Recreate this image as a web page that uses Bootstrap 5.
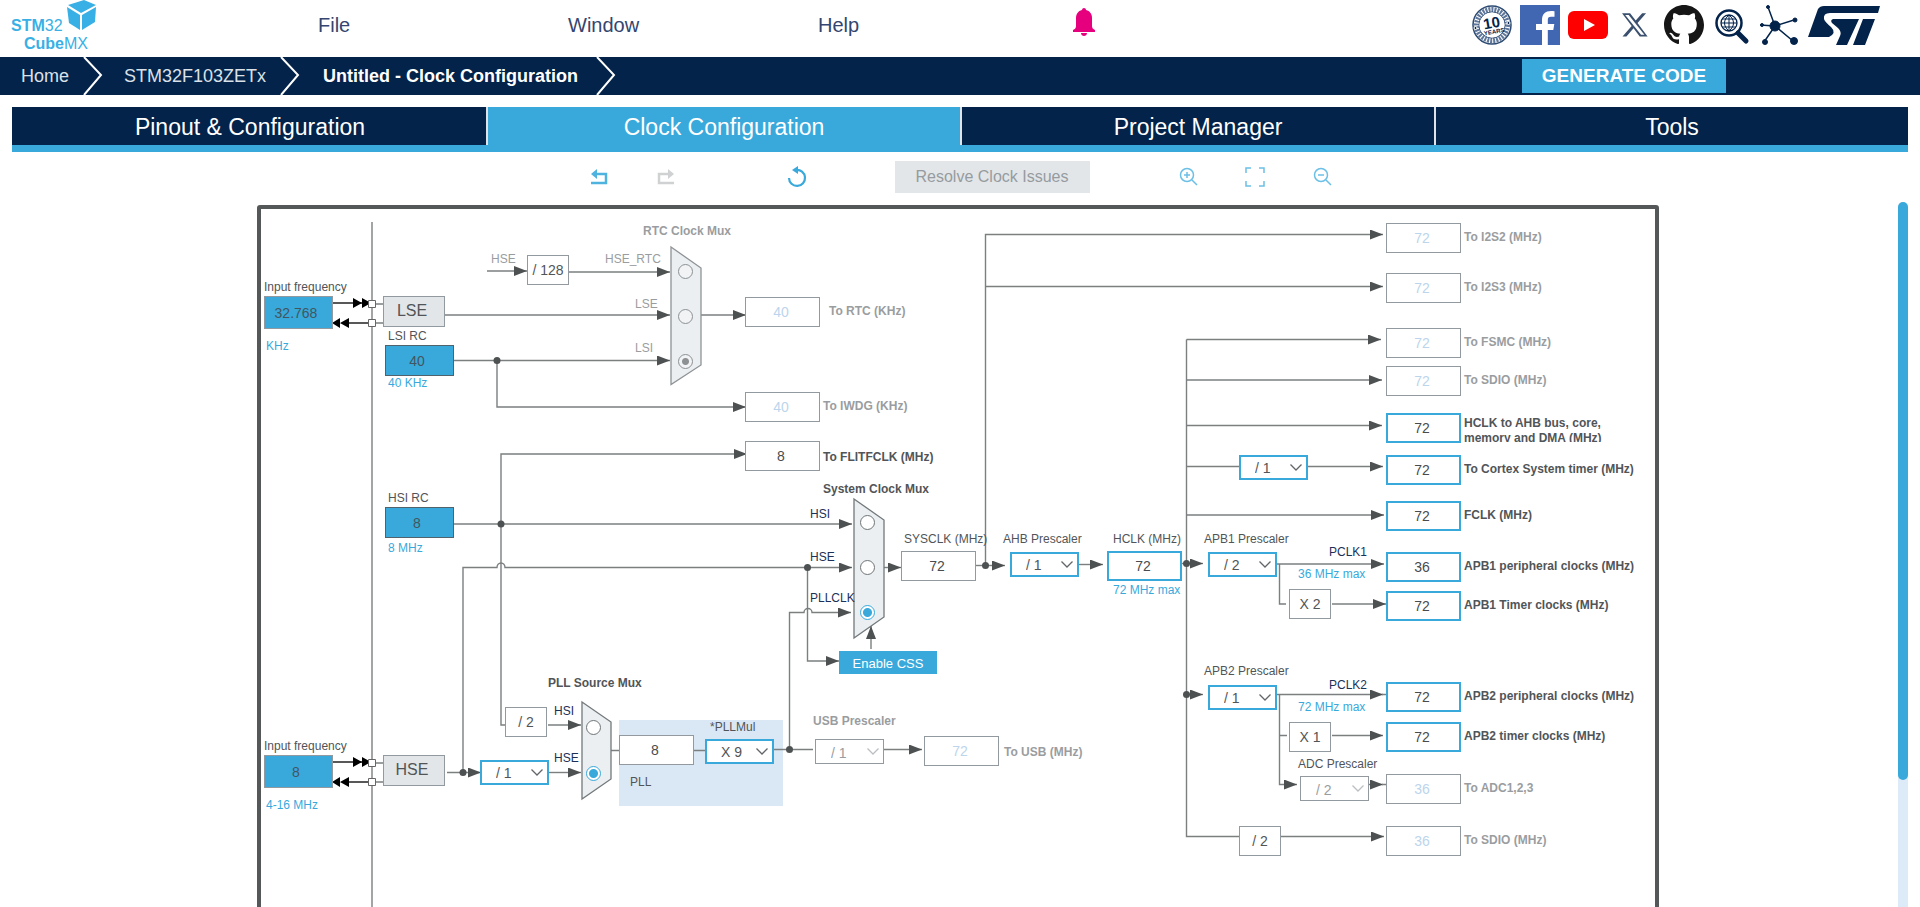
<!DOCTYPE html>
<html lang="en">
<head>
<meta charset="utf-8">
<meta name="viewport" content="width=device-width, initial-scale=1">
<title>STM32CubeMX - Clock Configuration</title>
<link href="https://cdn.jsdelivr.net/npm/bootstrap@5.3.0/dist/css/bootstrap.min.css" rel="stylesheet">
<style>
:root { --navy:#03234b; --sky:#39a9dc; --ink:#515558; --mute:#9a9d9f; --edge:#929aa0; --plate:#e2e6e9; }
body { font-family:"Liberation Sans", Arial, sans-serif; font-size:14px; color:var(--ink); background:#fff; overflow:hidden; }

/* header */
.top-bar { height:57px; padding:0 40px 8px 0; }
.brand-logo { width:264px; height:57px; }
.menu-link { flex:0 0 250px; padding:0 54px; font-size:20px; line-height:24px; color:#34456f; text-decoration:none; }
.bell { width:24px; height:30px; padding:0; border:0; background:none; margin-left:10px; }
.crumbs { height:38px; background:var(--navy); }
.crumbs a { color:#dbe1e8; font-size:18px; text-decoration:none; padding:0 14px 0 21px; }
.crumbs a.current { font-weight:700; color:#fff; padding:0 18px 0 23px; }
.crumbs svg { width:20px; height:38px; flex:none; }
.btn-generate { background:var(--sky); color:#fff; font-weight:700; font-size:19px; line-height:24px; width:204px; height:34px; padding:0; border:0; border-radius:0; margin-right:194px; }

/* tabs */
.view-tabs { margin:12px 12px 0; border-bottom:7px solid var(--sky); }
.view-tabs .nav-link { font-size:23px; line-height:26px; padding:7px 0 5px; border:0; border-radius:0; background:var(--navy); color:#fff; border-left:2px solid #dfe3e8; }
.view-tabs .nav-item:first-child .nav-link { border-left-color:var(--navy); }
.view-tabs .nav-link.active { background:var(--sky); color:#fff; }

/* toolbar */
.tools { height:48px; padding-top:2px; }
.tool { width:24px; height:24px; padding:0; border:0; background:none; display:flex; align-items:center; justify-content:center; }
.btn-resolve { width:195px; height:32px; margin:0 86px; padding:0; border:0; border-radius:0; font-size:16px; line-height:24px; }
.btn-resolve:disabled { background:var(--plate); color:#969b9f; opacity:1; }
.gap-s { margin-right:43px; } .gap-l { margin-right:107px; }

/* diagram */
.work { margin:0 12px; min-height:0; }
.canvas-wrap { overflow:hidden; padding-left:10px; }
.canvas { position:relative; width:1420px; height:900px; margin:0 auto; }
.track { width:10px; margin-top:2px; background:#dcebf7; border-radius:5px 5px 0 0; }
.thumb { height:82%; background:var(--sky); border-radius:5px; }
.wires { position:absolute; inset:0; width:100%; height:100%; }
.wires .w { fill:none; stroke:#7b7f7f; stroke-width:1.4; }
.wires .k { fill:none; stroke:#222; stroke-width:1.4; }
.node { position:absolute; }
.tag { position:absolute; font-size:12px; line-height:16px; white-space:nowrap; }
.tag-b { font-weight:700; }
.dim { color:var(--mute); }
.lit { color:var(--sky); }
.sig { color:#1b3158; }
.freq { width:75px; height:30px; padding:0 3px 0 0; text-align:center; border:1px solid var(--edge); background:#fff; color:#484c4e; font-size:14px; line-height:20px; border-radius:0; }
.freq:disabled { color:#bcd5ec; opacity:1; }
.freq.on { border:2px solid var(--sky); }
.source { width:69px; height:33px; padding:0 5px 0 0; text-align:center; background:var(--sky); border:1px solid var(--edge); color:#42565f; font-size:14px; line-height:20px; }
.source.rc { height:31px; border-color:#50636c; }
.osc { width:62px; height:31px; padding-right:4px; background:var(--plate); border:1px solid var(--edge); font-size:16px; line-height:28px; text-align:center; }
.ratio { width:42px; height:30px; background:#fff; border:1px solid var(--edge); text-align:center; font-size:14px; line-height:28px; white-space:nowrap; }
.scale { width:69px; height:25px; appearance:none; border:2px solid var(--sky); border-radius:0; padding:1px 0 0 14px; font-size:14px; line-height:20px; color:var(--ink);
  background:#fff url("data:image/svg+xml,%3Csvg xmlns='http://www.w3.org/2000/svg' width='12' height='7' fill='none' stroke='%23626669' stroke-width='1.3'%3E%3Cpath d='M.5.5 6 6 11.5.5'/%3E%3C/svg%3E") no-repeat right 4px center; }
.scale:disabled { border:1px solid var(--edge); padding:2px 0 0 15px; color:var(--mute); opacity:1;
  background-image:url("data:image/svg+xml,%3Csvg xmlns='http://www.w3.org/2000/svg' width='12' height='7' fill='none' stroke='%23bbbfc2' stroke-width='1.3'%3E%3Cpath d='M.5.5 6 6 11.5.5'/%3E%3C/svg%3E"); }
.pick { position:absolute; width:15px; height:15px; margin:0; appearance:none; border:1px solid #6f7477; border-radius:50%; background:#fff; }
.pick:checked { border-color:var(--sky); background:radial-gradient(circle, var(--sky) 4px, #fff 5px); }
.pick:disabled { border-color:#8d9194; background:#f1f3f5; }
.pick:disabled:checked { background:radial-gradient(circle, #8d9194 3px, #f1f3f5 4px); }
.btn-css { width:98px; height:23px; padding:2px 0 0; border:0; border-radius:0; background:var(--sky); color:#fff; font-size:13px; line-height:20px; }
.pll-panel { width:164px; height:86px; background:#dae8f5; }

/* output column: field and caption side by side */
.out { position:absolute; left:1136px; display:flex; align-items:center; gap:3px; }
.out label { font-size:12px; line-height:15px; font-weight:700; padding-bottom:2px; white-space:nowrap; }
.out .two-lines { align-self:flex-start; padding:3px 0 0; height:29px; width:146px; white-space:normal; overflow:hidden; }

#frame { left:7px; top:5px; width:1402px; height:880px; border:4px solid #545858; border-radius:3px; }
#lseFreq { left:14px; top:96px; } #lseFreqT { left:14px; top:79px; } #lseUnit { left:16px; top:138px; }
#hseFreq { left:14px; top:555px; } #hseFreqT { left:14px; top:538px; } #hseUnit { left:16px; top:597px; }
#lse { left:133px; top:96px; } #hse { left:133px; top:555px; }
#lsiT { left:138px; top:128px; } #lsi { left:135px; top:145px; } #lsiUnit { left:138px; top:175px; }
#hsiT { left:138px; top:290px; } #hsi { left:135px; top:307px; } #hsiUnit { left:138px; top:340px; }
#rtcT { left:393px; top:23px; } #rtcHse { left:241px; top:51px; } #rtcDiv { left:277px; top:55px; }
#rtcS1 { left:355px; top:51px; } #rtcS2 { left:385px; top:96px; } #rtcS3 { left:385px; top:140px; }
#rtcP1 { left:428px; top:64px; } #rtcP2 { left:428px; top:109px; } #rtcP3 { left:428px; top:154px; }
#rtcOut { left:495px; top:97px; } #rtcOutT { left:579px; top:103px; }
#iwdg { left:495px; top:192px; } #iwdgT { left:573px; top:198px; }
#flit { left:495px; top:241px; } #flitT { left:573px; top:249px; }
#sysT { left:573px; top:281px; } #sysS1 { left:560px; top:306px; } #sysS2 { left:560px; top:349px; } #sysS3 { left:560px; top:390px; }
#sysP1 { left:610px; top:315px; } #sysP2 { left:610px; top:360px; } #sysP3 { left:610px; top:405px; }
#css { left:589px; top:451px; }
#sysclkT { left:654px; top:331px; } #sysclk { left:651px; top:351px; }
#ahbT { left:753px; top:331px; } #ahb { left:760px; top:352px; }
#hclkT { left:863px; top:331px; } #hclk { left:857px; top:351px; } #hclkMax { left:863px; top:382px; }
#pllT { left:298px; top:475px; } #pllDiv { left:255px; top:507px; } #pllS1 { left:304px; top:503px; } #pllS2 { left:304px; top:550px; }
#hsePre { left:230px; top:560px; } #pllP1 { left:336px; top:520px; } #pllP2 { left:336px; top:566px; }
#pll { left:369px; top:520px; } #pllIn { left:369px; top:535px; } #pllMulT { left:460px; top:519px; } #pllMul { left:455px; top:539px; } #pllName { left:380px; top:574px; }
#usbT { left:563px; top:513px; } #usbPre { left:565px; top:539px; } #usb { left:674px; top:536px; } #usbOutT { left:754px; top:544px; }
#cortexPre { left:989px; top:255px; }
#apb1T { left:954px; top:331px; } #apb1 { left:958px; top:352px; } #pclk1 { left:1079px; top:344px; } #pclk1Max { left:1048px; top:366px; } #apb1Mul { left:1039px; top:389px; }
#apb2T { left:954px; top:463px; } #apb2 { left:958px; top:485px; } #pclk2 { left:1079px; top:477px; } #pclk2Max { left:1048px; top:499px; } #apb2Mul { left:1039px; top:522px; }
#adcT { left:1048px; top:556px; } #adcPre { left:1050px; top:576px; } #sdioDiv { left:989px; top:626px; }
#o1 { top:23px; } #o2 { top:73px; } #o3 { top:128px; } #o4 { top:166px; } #o5 { top:213px; } #o6 { top:255px; } #o7 { top:301px; }
#o8 { top:352px; } #o9 { top:391px; } #o10 { top:482px; } #o11 { top:522px; } #o12 { top:574px; } #o13 { top:626px; }
</style>
</head>
<body class="vh-100 d-flex flex-column">

<header class="top-bar d-flex align-items-center flex-shrink-0">
  <svg class="brand-logo flex-shrink-0 align-self-start" viewBox="0 0 264 57" role="img" aria-label="STM32 CubeMX" fill="#39b0e5" font-size="16">
    <text x="11" y="31"><tspan font-weight="700">STM</tspan>32</text>
    <text x="24" y="49"><tspan font-weight="700">Cube</tspan>MX</text>
    <path d="M68 5 84 0 96 5 81 13Z"/><path d="M67 7 80 15V30L69 23Z"/><path d="M82 15 96 7 95 22 82 30Z"/>
  </svg>
  <nav class="d-flex">
    <a class="menu-link" href="#">File</a>
    <a class="menu-link" href="#">Window</a>
    <a class="menu-link" href="#">Help</a>
  </nav>
  <div class="flex-grow-1 ps-5">
    <button class="bell" type="button" aria-label="Notifications"><svg class="d-block" width="24" height="30" viewBox="0 0 24 30" fill="#e6007e"><path d="M12 1c1 0 2 .8 2 2 4 1 6 4 6 8v8c0 2 1 3 3 4v2H1v-2c2-1 3-2 3-4v-8c0-4 2-7 6-8 0-1.200 1-2 2-2Z"/><path d="M9 26h6c0 2-1.500 3-3 3s-3-1-3-3Z"/></svg></button>
  </div>
  <div class="d-flex gap-2 flex-shrink-0 text-nowrap">
    <a href="#" aria-label="10 years"><svg class="d-block" width="40" height="40" viewBox="0 0 40 40" fill="none" stroke="#2c4a72"><circle cx="20" cy="20" r="19" stroke-width="1.500"/><circle cx="20" cy="20" r="15.500" stroke-width="5" stroke-dasharray="2 1" stroke="#5f779a"/><circle cx="20" cy="20" r="13" stroke-width="1"/><circle cx="20" cy="20" r="12.500" fill="#fff" stroke="none"/><circle cx="3.500" cy="23" r="1.500" fill="#03234b" stroke="#fff"/><circle cx="36.500" cy="18" r="1.500" fill="#03234b" stroke="#fff"/><g transform="rotate(-10 20 20)" fill="#03234b" stroke="none" font-weight="700" text-anchor="middle"><text x="20" y="23" font-size="15">10</text><text x="21" y="29" font-size="6">YEARS</text></g></svg></a>
    <a href="#" aria-label="Facebook"><svg class="d-block" width="40" height="40" viewBox="0 0 40 40"><rect width="40" height="40" fill="#4267b2"/><path fill="#fff" d="M22 40V25h-6v-6h6v-4c0-6 3.500-9 9-9 1.600 0 3 .1 3.500.2v5.600h-3.500c-2.500 0-3.200 1.200-3.200 3.200v4h6.500l-1 6h-5.500v15Z"/></svg></a>
    <a href="#" aria-label="YouTube"><svg class="d-block" width="40" height="40" viewBox="0 0 40 40"><rect y="6" width="40" height="28" rx="6" fill="red"/><path fill="#fff" d="m16 14 11 6-11 6Z"/></svg></a>
    <a href="#" aria-label="X"><svg class="d-block" width="40" height="40" viewBox="0 0 40 40"><path transform="translate(6 7) scale(1.600)" fill="#3a506e" d="M12.600.75h2.454l-5.360 6.142L16 15.250h-4.937l-3.867-5.070-4.425 5.070H.316l5.733-6.570L0 .75h5.063l3.495 4.633L12.601.75Z"/><path transform="translate(6 7) scale(1.600)" fill="#fff" d="M11.900 14.200h2.100L4.200 1.800H2Z"/></svg></a>
    <a href="#" aria-label="GitHub"><svg class="d-block" width="40" height="40" viewBox="0 0 16 16" fill="#161616"><path d="M8 0C3.580 0 0 3.580 0 8c0 3.540 2.290 6.530 5.470 7.590.4.070.55-.17.55-.38 0-.19-.01-.82-.01-1.490-2.010.37-2.530-.49-2.690-.94-.09-.23-.48-.94-.82-1.130-.28-.15-.68-.52-.01-.53.63-.01 1.080.58 1.230.82.72 1.210 1.870.87 2.330.66.07-.52.28-.87.51-1.070-1.780-.2-3.640-.89-3.640-3.950 0-.87.31-1.590.82-2.150-.08-.2-.36-1.020.08-2.120 0 0 .67-.21 2.200.82.64-.18 1.320-.27 2-.27s1.360.09 2 .27c1.530-1.040 2.200-.82 2.200-.82.44 1.100.16 1.920.08 2.120.51.56.82 1.270.82 2.150 0 3.070-1.870 3.750-3.650 3.950.29.25.54.73.54 1.480 0 1.070-.01 1.930-.01 2.200 0 .21.15.46.55.38A8.010 8.010 0 0 0 16 8c0-4.420-3.580-8-8-8"/></svg></a>
    <a href="#" aria-label="Search"><svg class="d-block" width="40" height="40" viewBox="0 0 40 40" fill="none" stroke="#03234b"><circle cx="17" cy="18" r="12.500" stroke-width="2.500"/><path d="m26 28 8 8" stroke-width="5" stroke-linecap="round"/><circle cx="17" cy="18" r="8" stroke-width="1.300"/><path d="M9 18h16M10 14h14M10 22h14M17 10v16M17 10c-6 5-6 11 0 16M17 10c6 5 6 11 0 16" stroke-width="1"/></svg></a>
    <a href="#" aria-label="Network"><svg class="d-block" width="40" height="40" viewBox="0 0 40 40" fill="#03234b" stroke="#03234b"><path d="M15 21 8 2M15 21 34 15M15 21 0 20M15 21 4 37M15 21 33 36" stroke-width="1.500"/><circle cx="15" cy="21" r="5"/><circle cx="8" cy="2" r="1.500"/><circle cx="35" cy="15" r="2"/><circle cx="2" cy="20" r="1.500"/><circle cx="5" cy="37" r="2.500"/><circle cx="34" cy="36" r="3.500"/></svg></a>
    <a href="#" aria-label="ST"><svg class="d-block" width="72" height="40" viewBox="0 0 72 40" fill="#03234b"><path d="M0 32 10 4Q12 1 16 1H72L70 8H22Q15 8 16 14 17 17 23 22 29 28 21 32ZM25 14H51L39 40H28L32 31Q34 27 30 23L24 18Q22 15 25 14ZM55 14H67L57 40H45Z"/></svg></a>
  </div>
</header>

<nav class="crumbs d-flex align-items-center flex-shrink-0" aria-label="breadcrumb">
  <a href="#">Home</a>
  <svg viewBox="0 0 20 38" fill="none" stroke="#fff" stroke-width="2"><path d="M1 0 18 18 1 38"/></svg>
  <a href="#">STM32F103ZETx</a>
  <svg viewBox="0 0 20 38" fill="none" stroke="#fff" stroke-width="2"><path d="M1 0 18 18 1 38"/></svg>
  <a class="current" href="#" aria-current="page">Untitled - Clock Configuration</a>
  <svg viewBox="0 0 20 38" fill="none" stroke="#fff" stroke-width="2"><path d="M1 0 18 18 1 38"/></svg>
  <button class="btn btn-generate ms-auto" type="button">GENERATE CODE</button>
</nav>

<ul class="view-tabs nav nav-fill nav-justified flex-shrink-0">
  <li class="nav-item"><a class="nav-link" href="#">Pinout &amp; Configuration</a></li>
  <li class="nav-item"><a class="nav-link active" href="#">Clock Configuration</a></li>
  <li class="nav-item"><a class="nav-link" href="#">Project Manager</a></li>
  <li class="nav-item"><a class="nav-link" href="#">Tools</a></li>
</ul>

<div class="tools d-flex align-items-center justify-content-center flex-shrink-0" role="toolbar" aria-label="Clock tools">
  <button class="tool gap-s" type="button" aria-label="Undo"><svg width="18" height="16" viewBox="0 0 18 16" fill="none" stroke="#4fb3e0" stroke-width="2.500"><path d="M4 5h12v9H1"/><path d="M7 0v10L1 5Z" fill="#4fb3e0" stroke="none"/></svg></button>
  <button class="tool gap-l" type="button" aria-label="Redo" disabled><svg width="18" height="16" viewBox="0 0 18 16" fill="none" stroke="#cfd1d2" stroke-width="2.500"><path d="M14 5H2v9h15"/><path d="M11 0v10l6-5Z" fill="#cfd1d2" stroke="none"/></svg></button>
  <button class="tool" type="button" aria-label="Reset"><svg width="20" height="22" viewBox="0 0 20 22" fill="none" stroke="#39a9dc" stroke-width="2.200"><path d="M2 12a8 8 0 1 0 7-8"/><path d="M11 0v8L5 4Z" fill="#39a9dc" stroke="none"/></svg></button>
  <button class="btn btn-resolve" type="button" disabled>Resolve Clock Issues</button>
  <button class="tool gap-s" type="button" aria-label="Zoom in"><svg width="20" height="20" viewBox="0 0 20 20" fill="none" stroke="#6cc0e6" stroke-width="1.500"><circle cx="9" cy="8" r="6.500"/><path d="m14 13 5 5M9 5v6M6 8h6"/></svg></button>
  <button class="tool gap-s" type="button" aria-label="Fit"><svg width="20" height="20" viewBox="0 0 20 20" fill="none" stroke="#6cc0e6" stroke-width="1.500"><path d="M1 6V1h5M14 1h5v5M19 14v5h-5M6 19H1v-5"/></svg></button>
  <button class="tool" type="button" aria-label="Zoom out"><svg width="20" height="20" viewBox="0 0 20 20" fill="none" stroke="#6cc0e6" stroke-width="1.500"><circle cx="9" cy="8" r="6.500"/><path d="m14 13 5 5M6 8h6"/></svg></button>
</div>

<main class="work d-flex flex-grow-1">
  <div class="canvas-wrap flex-grow-1">
    <div class="canvas">
      <div class="node" id="frame"></div>
      <div class="node pll-panel" id="pll"></div>
      <svg class="wires" viewBox="0 0 1420 900" aria-hidden="true">
        <defs>
          <marker id="tip" markerUnits="userSpaceOnUse" markerWidth="13" markerHeight="10" refX="13" refY="5" orient="auto"><path d="M0 0 13 5 0 10Z" fill="#4d5152"/></marker>
          <g id="pins">
            <path class="k" d="M83 103h36M99 123h20"/>
            <path d="m103 98 9 5-9 5ZM112 98l9 5-9 5ZM90 118l-8 5 8 5ZM99 118l-9 5 9 5Z"/>
            <path class="w" d="M126 104h7M126 123h7"/>
            <path d="M118.500 100.500h7v7h-7ZM118.500 119.500h7v7h-7Z" fill="#fff" stroke="#666"/>
          </g>
        </defs>
        <path class="w" d="M122 22V900"/>
        <use href="#pins"/><use href="#pins" y="459"/>
        <g class="w" marker-end="url(#tip)">
          <path d="M237 71H277"/><path d="M319 72H420"/><path d="M195 115H420"/><path d="M204 160.500H420"/><path d="M247 160V207H496"/><path d="M451 115H496"/>
          <path d="M204 324H602"/><path d="M251 324V254H497"/><path d="M298 525H331"/><path d="M299 572.500H331"/>
          <path d="M197 572.500H231"/><path d="M213 572V367.500H247a4 4.500 0 0 1 8 0H602"/>
          <path d="M539.500 549V412.500H554a4 4 0 0 1 8 0H601"/><path d="M557.500 367V461H589"/>
          <path d="M634 367.500H651"/><path d="M725 365.500H755"/><path d="M829 364.500H853"/><path d="M932 363.500H953"/>
          <path d="M735.500 365V34.500H1133"/><path d="M735.500 86.500H1133"/>
          <path d="M936.500 139.500H1131"/><path d="M936.500 180H1132"/><path d="M936.500 225.500H1132"/><path d="M1058 266.500H1133"/><path d="M936.500 315H1134"/>
          <path d="M1027 364H1134"/><path d="M1082 404H1136"/><path d="M936.500 494.500H953"/><path d="M1027 494.500H1133"/><path d="M1082 535.500H1133"/>
          <path d="M1029.500 494V584.500H1047"/><path d="M1119 584.500H1133"/><path d="M1031 636.500H1134"/><path d="M634 549.500H672"/>
        </g>
        <path class="w" d="M251 324V525H255M361 550.500H369M444 550.500H456M524 549.500H563M936.500 139.500V636.500H989M936.500 266.500H989M1029.500 364V404H1036M1029.500 535.500H1037M1132 494.500H1136M1132 584.500H1136"/>
        <g fill="#4d5152"><circle cx="247" cy="160.500" r="3.500"/><circle cx="251" cy="324" r="3.500"/><circle cx="213" cy="572.500" r="3.500"/><circle cx="539.500" cy="549.500" r="3.500"/><circle cx="557.500" cy="367.500" r="3.500"/><circle cx="735.500" cy="365.500" r="3.500"/><circle cx="936.500" cy="363.500" r="3.500"/><circle cx="936.500" cy="494.500" r="3.500"/></g>
        <g fill="#ebeff2" stroke="#73787b" stroke-width="1.300"><path d="M421 47 451 68V165L421 184.500Z" stroke="#8f9396"/><path d="M332 502 361 522V579L332 599Z"/><path d="M604 299 634 320V417L604 438Z"/></g>
        <path class="w" d="M621 449V426" marker-end="url(#tip)"/>
      </svg>

      <label class="tag" id="lseFreqT" for="lseFreq">Input frequency</label>
      <input class="node source" id="lseFreq" type="text" value="32.768">
      <span class="tag lit" id="lseUnit">KHz</span>
      <div class="node osc" id="lse">LSE</div>
      <label class="tag" id="lsiT" for="lsi">LSI RC</label>
      <input class="node source rc" id="lsi" type="text" value="40" readonly>
      <span class="tag lit" id="lsiUnit">40 KHz</span>
      <label class="tag" id="hsiT" for="hsi">HSI RC</label>
      <input class="node source rc" id="hsi" type="text" value="8" readonly>
      <span class="tag lit" id="hsiUnit">8 MHz</span>
      <label class="tag" id="hseFreqT" for="hseFreq">Input frequency</label>
      <input class="node source" id="hseFreq" type="text" value="8">
      <span class="tag lit" id="hseUnit">4-16 MHz</span>
      <div class="node osc" id="hse">HSE</div>

      <span class="tag tag-b dim" id="rtcT">RTC Clock Mux</span>
      <span class="tag dim" id="rtcHse">HSE</span>
      <div class="node ratio" id="rtcDiv">/ 128</div>
      <label class="tag dim" id="rtcS1" for="rtcP1">HSE_RTC</label>
      <label class="tag dim" id="rtcS2" for="rtcP2">LSE</label>
      <label class="tag dim" id="rtcS3" for="rtcP3">LSI</label>
      <input class="pick" id="rtcP1" type="radio" name="rtc" disabled>
      <input class="pick" id="rtcP2" type="radio" name="rtc" disabled>
      <input class="pick" id="rtcP3" type="radio" name="rtc" disabled checked>
      <input class="node freq" id="rtcOut" type="text" value="40" disabled>
      <label class="tag tag-b dim" id="rtcOutT" for="rtcOut">To RTC (KHz)</label>
      <input class="node freq" id="iwdg" type="text" value="40" disabled>
      <label class="tag tag-b dim" id="iwdgT" for="iwdg">To IWDG (KHz)</label>
      <input class="node freq" id="flit" type="text" value="8" readonly>
      <label class="tag tag-b" id="flitT" for="flit">To FLITFCLK (MHz)</label>

      <span class="tag tag-b" id="sysT">System Clock Mux</span>
      <label class="tag sig" id="sysS1" for="sysP1">HSI</label>
      <label class="tag sig" id="sysS2" for="sysP2">HSE</label>
      <label class="tag sig" id="sysS3" for="sysP3">PLLCLK</label>
      <input class="pick" id="sysP1" type="radio" name="sys">
      <input class="pick" id="sysP2" type="radio" name="sys">
      <input class="pick" id="sysP3" type="radio" name="sys" checked>
      <button class="node btn btn-css" id="css" type="button">Enable CSS</button>
      <label class="tag" id="sysclkT" for="sysclk">SYSCLK (MHz)</label>
      <input class="node freq" id="sysclk" type="text" value="72" readonly>
      <label class="tag" id="ahbT" for="ahb">AHB Prescaler</label>
      <select class="node scale" id="ahb"><option>/ 1</option><option>/ 2</option><option>/ 4</option></select>
      <label class="tag" id="hclkT" for="hclk">HCLK (MHz)</label>
      <input class="node freq on" id="hclk" type="text" value="72">
      <span class="tag lit" id="hclkMax">72 MHz max</span>

      <span class="tag tag-b" id="pllT">PLL Source Mux</span>
      <div class="node ratio" id="pllDiv">/ 2</div>
      <label class="tag sig" id="pllS1" for="pllP1">HSI</label>
      <label class="tag sig" id="pllS2" for="pllP2">HSE</label>
      <input class="pick" id="pllP1" type="radio" name="pllsrc">
      <input class="pick" id="pllP2" type="radio" name="pllsrc" checked>
      <select class="node scale" id="hsePre" aria-label="HSE divider"><option>/ 1</option><option>/ 2</option></select>
      <input class="node freq" id="pllIn" type="text" value="8" aria-label="PLL input" readonly>
      <label class="tag" id="pllMulT" for="pllMul">*PLLMul</label>
      <select class="node scale" id="pllMul"><option>X 9</option><option>X 8</option></select>
      <span class="tag" id="pllName">PLL</span>

      <label class="tag tag-b dim" id="usbT" for="usbPre">USB Prescaler</label>
      <select class="node scale" id="usbPre" disabled><option>/ 1</option></select>
      <input class="node freq" id="usb" type="text" value="72" disabled>
      <label class="tag tag-b dim" id="usbOutT" for="usb">To USB (MHz)</label>

      <select class="node scale" id="cortexPre" aria-label="Cortex timer prescaler"><option>/ 1</option><option>/ 8</option></select>
      <label class="tag" id="apb1T" for="apb1">APB1 Prescaler</label>
      <select class="node scale" id="apb1"><option>/ 2</option><option>/ 1</option></select>
      <span class="tag sig" id="pclk1">PCLK1</span>
      <span class="tag lit" id="pclk1Max">36 MHz max</span>
      <div class="node ratio" id="apb1Mul">X 2</div>
      <label class="tag" id="apb2T" for="apb2">APB2 Prescaler</label>
      <select class="node scale" id="apb2"><option>/ 1</option><option>/ 2</option></select>
      <span class="tag sig" id="pclk2">PCLK2</span>
      <span class="tag lit" id="pclk2Max">72 MHz max</span>
      <div class="node ratio" id="apb2Mul">X 1</div>
      <label class="tag" id="adcT" for="adcPre">ADC Prescaler</label>
      <select class="node scale" id="adcPre" disabled><option>/ 2</option></select>
      <div class="node ratio" id="sdioDiv">/ 2</div>

      <div class="out" id="o1"><input class="freq" id="f1" type="text" value="72" disabled><label class="dim" for="f1">To I2S2 (MHz)</label></div>
      <div class="out" id="o2"><input class="freq" id="f2" type="text" value="72" disabled><label class="dim" for="f2">To I2S3 (MHz)</label></div>
      <div class="out" id="o3"><input class="freq" id="f3" type="text" value="72" disabled><label class="dim" for="f3">To FSMC (MHz)</label></div>
      <div class="out" id="o4"><input class="freq" id="f4" type="text" value="72" disabled><label class="dim" for="f4">To SDIO (MHz)</label></div>
      <div class="out" id="o5"><input class="freq on" id="f5" type="text" value="72"><label class="two-lines" for="f5">HCLK to AHB bus, core, memory and DMA (MHz)</label></div>
      <div class="out" id="o6"><input class="freq on" id="f6" type="text" value="72"><label for="f6">To Cortex System timer (MHz)</label></div>
      <div class="out" id="o7"><input class="freq on" id="f7" type="text" value="72"><label for="f7">FCLK (MHz)</label></div>
      <div class="out" id="o8"><input class="freq on" id="f8" type="text" value="36"><label for="f8">APB1 peripheral clocks (MHz)</label></div>
      <div class="out" id="o9"><input class="freq on" id="f9" type="text" value="72"><label for="f9">APB1 Timer clocks (MHz)</label></div>
      <div class="out" id="o10"><input class="freq on" id="f10" type="text" value="72"><label for="f10">APB2 peripheral clocks (MHz)</label></div>
      <div class="out" id="o11"><input class="freq on" id="f11" type="text" value="72"><label for="f11">APB2 timer clocks (MHz)</label></div>
      <div class="out" id="o12"><input class="freq" id="f12" type="text" value="36" disabled><label class="dim" for="f12">To ADC1,2,3</label></div>
      <div class="out" id="o13"><input class="freq" id="f13" type="text" value="36" disabled><label class="dim" for="f13">To SDIO (MHz)</label></div>
    </div>
  </div>
  <div class="track flex-shrink-0" aria-hidden="true"><div class="thumb"></div></div>
</main>

<script src="https://cdn.jsdelivr.net/npm/bootstrap@5.3.0/dist/js/bootstrap.bundle.min.js"></script>
</body>
</html>
